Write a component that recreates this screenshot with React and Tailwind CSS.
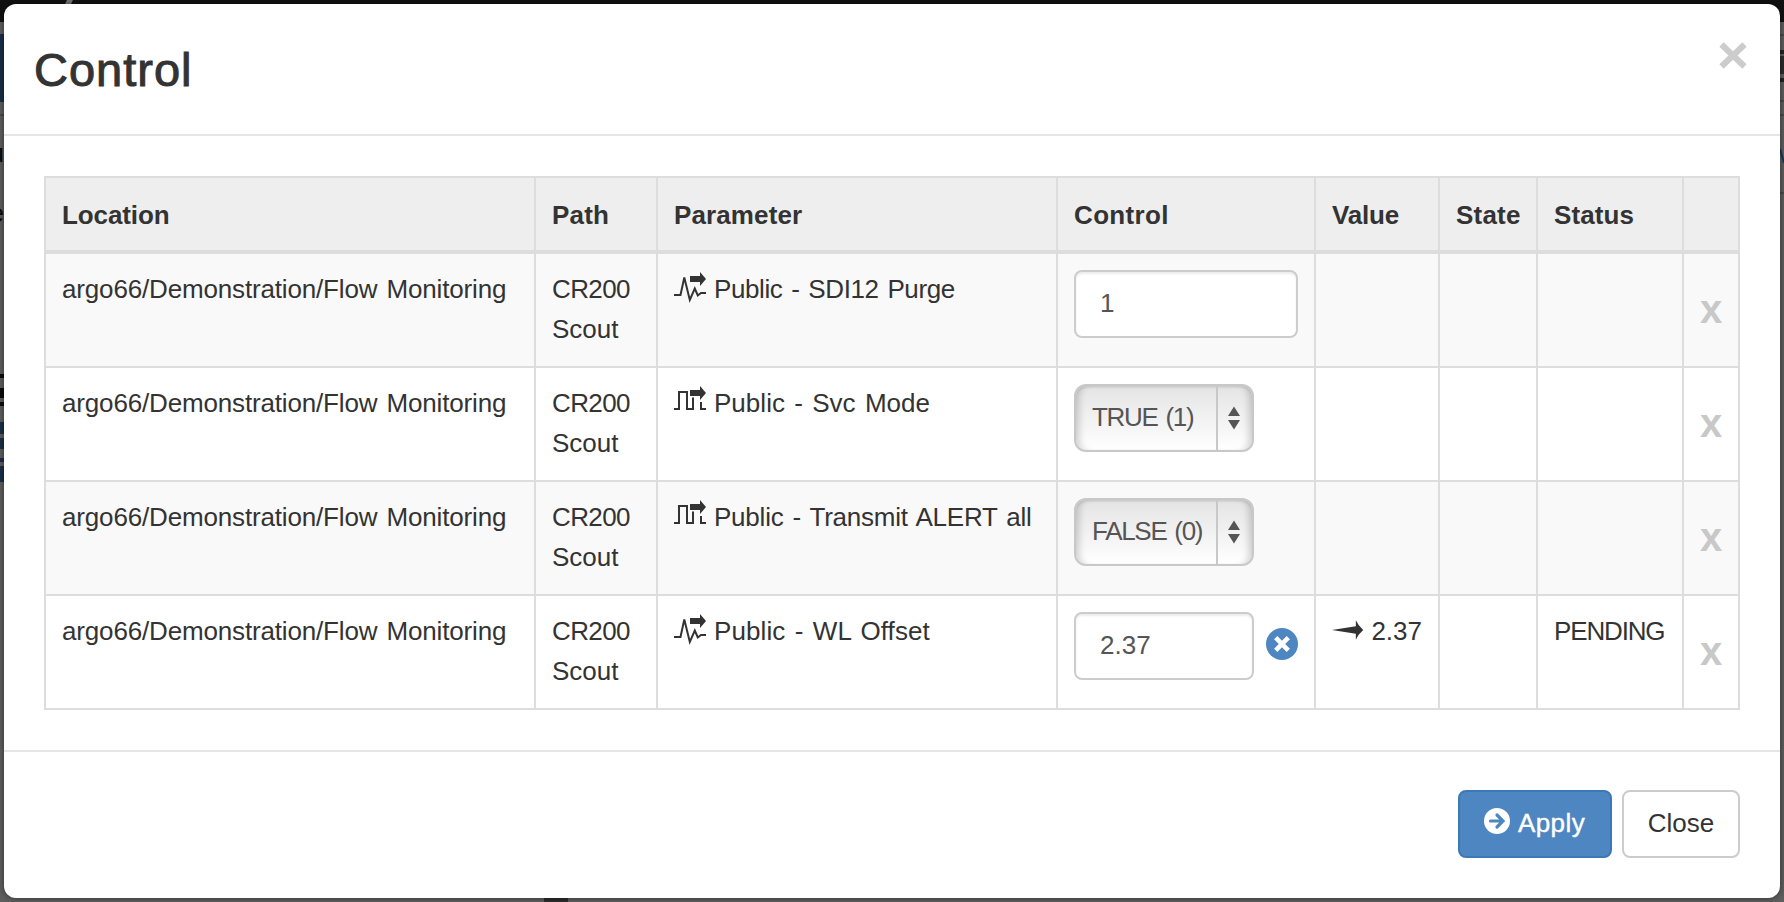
const rows = [
  { icon: "analog", name: "Public - SDI12 Purge", gap: "tracking-[-0.4px]", kind: "input", value: "1" },
  { icon: "digital", name: "Public - Svc Mode", gap: "tracking-[0.03px]", kind: "select", value: "TRUE (1)" },
  { icon: "digital", name: "Public - Transmit ALERT all", gap: "tracking-[-0.22px]", kind: "select", value: "FALSE (0)" },
  { icon: "analog", name: "Public - WL Offset", gap: "tracking-[0.1px]", kind: "pending", value: "2.37" },
];

const headings = [
  { label: "Location", gap: "tracking-[-0.1px]" },
  { label: "Path", gap: "tracking-[0.2px]" },
  { label: "Parameter", gap: "tracking-[0.12px]" },
  { label: "Control", gap: "tracking-[0.35px]" },
  { label: "Value", gap: "tracking-[-0.2px]" },
  { label: "State", gap: "tracking-[0.2px]" },
  { label: "Status", gap: "tracking-[0.1px]" },
  { label: "", gap: "" },
];

function SignalIcon({ type }) {
  return (
    <svg className="inline-block h-[34px] w-8 shrink-0" viewBox="0 0 32 34">
      {type === "analog" ? (
        <path d="M0 25H6.5L10.3 7.5L15.8 30L20.8 18.5L23.8 25.5L27 23H32" fill="none" stroke="#333" strokeWidth="2" />
      ) : (
        <path d="M0 25H5V8H13V25H19V13.5M27 18V25H32" fill="none" stroke="#333" strokeWidth="2" />
      )}
      <path d="M16 6H26V2L32 9L26 16V12H16Z" fill="#333" />
    </svg>
  );
}

function NumberInput({ value, width }) {
  return (
    <div className={`flex h-[68px] ${width} items-center rounded-lg border-2 border-[#ccc] bg-white pb-0.5 pl-6 text-[#555] shadow-[inset_0_2px_2px_rgba(0,0,0,0.075)]`}>
      {value}
    </div>
  );
}

function SelectBox({ value }) {
  return (
    <div className="flex h-[68px] w-[180px] rounded-xl border-2 border-[#c8c8c8] bg-linear-to-b from-[#e4e4e4] to-white text-[#555] shadow-[inset_8px_0_6px_-4px_rgba(0,0,0,0.15),inset_-8px_0_6px_-4px_rgba(0,0,0,0.15),inset_0_2px_2px_rgba(0,0,0,0.08)]">
      <div className="flex w-[142px] items-center whitespace-nowrap border-r-2 border-[#c8c8c8] pb-0.5 pl-4 tracking-[-1.3px] [word-spacing:2px]">{value}</div>
      <div className="flex flex-1 items-center justify-center pr-0.5">
        <svg className="h-6 w-3" viewBox="0 0 12 24">
          <path d="M6 0.5L12 10H0ZM6 23.5L12 14H0Z" fill="#555" />
        </svg>
      </div>
    </div>
  );
}

function Control({ row }) {
  if (row.kind === "input") return <NumberInput value={row.value} width="w-[224px]" />;
  if (row.kind === "select") return <SelectBox value={row.value} />;
  return (
    <div className="flex items-center">
      <NumberInput value={row.value} width="w-[180px]" />
      <svg className="mb-1 ml-3 h-8 w-8" viewBox="0 0 32 32">
        <circle cx="16" cy="16" r="16" fill="#4d86c1" />
        <path d="M9.7 9.7L22.3 22.3M22.3 9.7L9.7 22.3" stroke="#fff" strokeWidth="4.6" />
      </svg>
    </div>
  );
}

// Slivers of the dimmed page that stay visible around the dialog.
function Backdrop() {
  return (
    <div className="absolute inset-0 flex justify-between overflow-hidden text-[#0b0b0b]">
      <div className="flex w-1 flex-col">
        <div className="mt-[34px] h-[68px] bg-[#182f49]" />
        <div className="mt-3 h-0.5 bg-[#4a4a4a]" />
        <div className="mt-[17px] flex h-10 justify-end"><span>u</span></div>
        <div className="mt-5 flex h-10 justify-end"><span>e</span></div>
        <div className="mt-[141px] h-1 bg-[#0e0c0a]" />
        <div className="mt-2.5 h-2.5 bg-[#0e0c0a]" />
        <div className="mt-1 h-1 bg-[#0e0c0a]" />
        <div className="mt-4 h-3 bg-[#1b3049]" />
        <div className="mt-1 h-[11px] bg-[#1b3049]" />
        <div className="mt-[9px] h-1 bg-[#1b3049]" />
        <div className="mt-1 h-4 bg-[#1b3049]" />
      </div>
      <div className="flex flex-1 flex-col justify-between">
        <div className="ml-[62px] h-1 w-1.5 -skew-x-[24deg] bg-[#777]" />
        <div className="ml-[540px] h-1 w-6 bg-[#2c2c2c]" />
      </div>
      <div className="flex w-1 flex-col">
        <div className="mt-[34px] h-0.5 bg-[#4a4a4a]" />
        <div className="mt-3.5 h-1 bg-[#222]" />
        <div className="mt-0.5 h-[18px] bg-[#2c2c2c]" />
        <div className="mt-1 h-1 bg-[#222]" />
        <div className="mt-[18px] h-0.5 bg-[#4a4a4a]" />
        <div className="mt-3 h-0.5 bg-[#4a4a4a]" />
        <svg className="mt-[30px] h-5 w-1" viewBox="0 0 4 20">
          <path d="M0 3L4 17" stroke="#1b3658" strokeWidth="2" />
        </svg>
        <div className="mt-[26px] h-0.5 bg-[#4a4a4a]" />
      </div>
    </div>
  );
}

const td = "border-b-2 border-r-2 border-[#ddd] px-4 py-4 align-top";
const th = "h-[76px] border-b-4 border-r-2 border-[#ddd] bg-[#eee] px-4 pt-px text-left align-middle font-bold";

export default function App() {
  return (
    <div className="relative h-[902px] w-[1784px] overflow-hidden bg-linear-to-b from-[#111] from-[22px] to-[#5e5e5e] to-[22px] p-1 font-['Liberation_Sans',Arial,sans-serif] text-[26px] leading-10 text-[#333]">
      <Backdrop />
      <div className="relative flex h-[894px] flex-col rounded-xl bg-white shadow-[0_0_6px_rgba(0,0,0,0.5)]">
        <header className="flex h-[132px] items-start justify-between border-b-2 border-[#e5e5e5] pl-[30px] pr-[33px]">
          <h3 className="mt-[38px] text-[47px] leading-[56px] tracking-[1px] [-webkit-text-stroke:1px_#333]">Control</h3>
          <svg className="mt-[37px] h-7 w-7" viewBox="0 0 28 28">
            <path d="M2.5 3.5L25.5 25.5M25.5 3.5L2.5 25.5" stroke="#ccc" strokeWidth="6.2" />
          </svg>
        </header>
        <main className="h-[616px] border-b-2 border-[#e5e5e5] px-10 pt-10">
          <table className="w-[1696px] table-fixed border-separate border-spacing-0 border-l-2 border-t-2 border-[#ddd]">
            <colgroup>
              <col className="w-[490px]" />
              <col className="w-[122px]" />
              <col className="w-[400px]" />
              <col className="w-[258px]" />
              <col className="w-[124px]" />
              <col className="w-[98px]" />
              <col className="w-[146px]" />
              <col className="w-[56px]" />
            </colgroup>
            <thead>
              <tr>
                {headings.map((h) => (
                  <th key={h.label} className={`${th} ${h.gap}`}>{h.label}</th>
                ))}
              </tr>
            </thead>
            <tbody>
              {rows.map((row) => (
                <tr key={row.name} className="h-[114px] odd:bg-[#f9f9f9]">
                  <td className={td}>
                    <span className="-mt-px block whitespace-nowrap tracking-[-0.16px] [word-spacing:2px]">argo66/Demonstration/Flow Monitoring</span>
                  </td>
                  <td className={td}>
                    <span className="-mt-px block"><span className="tracking-[-0.6px]">CR200</span> Scout</span>
                  </td>
                  <td className={td}>
                    <div className="flex h-10 gap-2 whitespace-nowrap">
                      <SignalIcon type={row.icon} />
                      <span className={`-mt-px [word-spacing:2px] ${row.gap}`}>{row.name}</span>
                    </div>
                  </td>
                  <td className={td}><Control row={row} /></td>
                  <td className={td}>
                    {row.kind === "pending" && (
                      <div className="flex gap-2">
                        <svg className="mt-1.5 h-6 w-8" viewBox="0 0 32 24">
                          <path d="M0 12L24.3 8.2V2Q27 8 32 12Q27 16 24.3 22V15.8Z" fill="#333" />
                        </svg>
                        <span className="-mt-px">2.37</span>
                      </div>
                    )}
                  </td>
                  <td className={td} />
                  <td className={td}>
                    {row.kind === "pending" && <span className="-mt-px block tracking-[-1.15px]">PENDING</span>}
                  </td>
                  <td className="border-b-2 border-r-2 border-[#ddd] pb-0.5 text-center align-middle text-[40px] font-bold text-[#c8c8c8]">x</td>
                </tr>
              ))}
            </tbody>
          </table>
        </main>
        <footer className="flex justify-end gap-2.5 px-10 pt-[38px]">
          <button className="flex h-[68px] w-[154px] items-center gap-2 rounded-lg border-2 border-[#3b78b8] bg-[#4d86c1] pl-6 text-white">
            <svg className="mb-1.5 h-[26px] w-[26px]" viewBox="0 0 26 26">
              <circle cx="13" cy="13" r="13" fill="#fff" />
              <path d="M6.5 13H19M13 7L19 13L13 19" fill="none" stroke="#4d86c1" strokeWidth="3.2" strokeLinecap="round" />
            </svg>
            <span className="pb-0.5 tracking-[0.4px] [-webkit-text-stroke:0.4px_#fff]">Apply</span>
          </button>
          <button className="flex h-[68px] w-[118px] items-center justify-center rounded-lg border-2 border-[#ccc] bg-white pb-0.5">Close</button>
        </footer>
      </div>
    </div>
  );
}
